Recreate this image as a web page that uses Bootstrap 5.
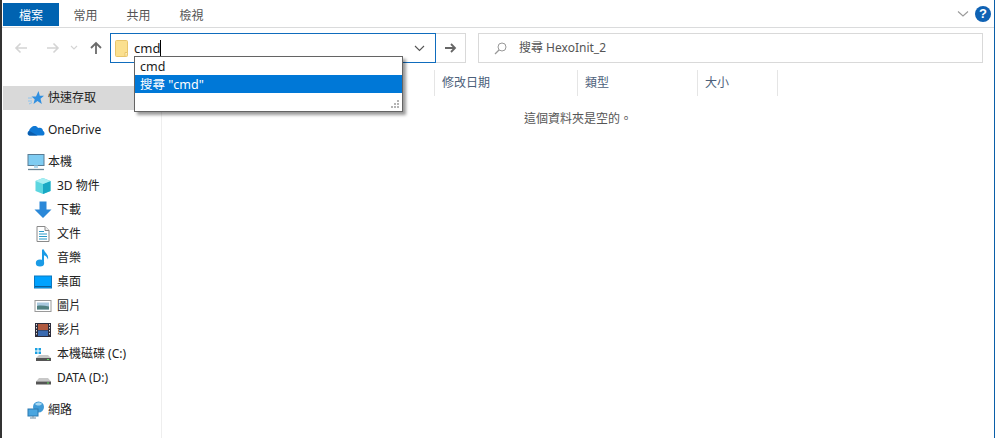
<!DOCTYPE html>
<html lang="zh-Hant">
<head>
<meta charset="utf-8">
<link href="https://cdn.jsdelivr.net/npm/bootstrap@5.3.0/dist/css/bootstrap.min.css" rel="stylesheet">
<style>
html,body{height:100%;overflow:hidden}
body{background:#fff;color:#1a1a1a;font:12px/16px "Noto Sans","Noto Sans CJK TC",sans-serif}
.win{height:438px;width:995px;border-left:2px solid #333;border-right:1px solid #0a5ea8;position:relative}
.ribbon{height:28px;border-bottom:1px solid #dadbdc;padding:3px 0 0 1px}
.rtab{height:23px;line-height:25px;width:53px;text-align:center;color:#555;white-space:nowrap}
.rtab.on{background:#0063b1;color:#fff;width:56px}
.winctl{margin-top:3px;padding-right:3px}
.fold{margin-right:6px}
.helpdot{width:16px;height:16px;border-radius:50%;background:#0f62b4;color:#fff;font:bold 13px/16px "Liberation Sans",sans-serif;text-align:center}
.addr{height:29px;margin-top:5px}
.navs{width:108px;padding-left:12px}
.fwd{margin-left:18px}
.hist{margin-left:10px}
.upbtn{margin-left:11px}
.pathbox{width:326px;height:30px;border:1px solid #0f6cbd;padding:0 10px 0 4px}
.gobox{width:30px;height:30px;border:1px solid #d9d9d9;border-left:0}
.findbox{width:505px;height:30px;border:1px solid #d9d9d9;margin-left:12px;color:#555;padding-left:15px}
.lens{margin-right:12px}
.typed{font-size:13px;margin-left:6px;border-right:1px solid #000;line-height:17px}
.sidepane{width:160px;height:375px;border-right:1px solid #eeeeee;margin-top:9px;flex:none;padding-top:15px}
.sideitem{height:24px;white-space:nowrap;color:#222}
.sideitem.sel{background:#d9d9d9;width:132px;margin-left:1px}
.lv1{padding-left:25px}
.lv1.sel{padding-left:24px}
.lv2{padding-left:32px}
.mt8px{margin-top:8px}
.ic{width:18px;height:18px;flex:none;margin-right:5px}
.lv1 .ic{margin-right:3px}
.colhead{height:26px;margin-top:8px;color:#4c607a}
.colcell{height:26px;border-right:1px solid #e5e5e5;line-height:26px;padding-left:7px}
.cname{width:273px}
.cdate{width:143px}
.ctype{width:120px}
.csize{width:80px}
.emptymsg{margin-left:362px;margin-top:15px;color:#555;line-height:16px}
.popup{position:absolute;left:132px;top:56px;width:269px;height:56px;background:#fff;border:1px solid #646464;box-shadow:3px 3px 3px rgba(0,0,0,.4);font-size:12.5px}
.popitem{height:18px;line-height:20px;padding-left:5px}
.popitem.on{background:#0078d7;color:#fff}
.grip{position:absolute;right:2px;bottom:2px}
</style>
</head>
<body>
<div class="win">
  <div class="ribbon d-flex align-items-start">
    <div class="rtab on">檔案</div>
    <div class="rtab">常用</div>
    <div class="rtab">共用</div>
    <div class="rtab">檢視</div>
    <div class="winctl ms-auto d-flex align-items-center">
      <svg class="fold" width="12" height="8" viewBox="0 0 12 8"><path d="M1 1.500 6 6l5-4.500" fill="none" stroke="#9a9a9a" stroke-width="1.100"/></svg>
      <div class="helpdot">?</div>
    </div>
  </div>
  <div class="addr d-flex">
    <div class="navs d-flex align-items-center">
      <svg width="14" height="12" viewBox="0 0 14 12"><path d="M13 6H2M6.500 1.500 2 6l4.500 4.500" fill="none" stroke="#d4d4d4" stroke-width="1.600"/></svg>
      <svg class="fwd" width="14" height="12" viewBox="0 0 14 12"><path d="M1 6h11M7.500 1.500 12 6l-4.500 4.500" fill="none" stroke="#d4d4d4" stroke-width="1.600"/></svg>
      <svg class="hist" width="8" height="5" viewBox="0 0 8 5"><path d="M1 1 4 4l3-3" fill="none" stroke="#d4d4d4" stroke-width="1.100"/></svg>
      <svg class="upbtn" width="14" height="14" viewBox="0 0 14 14"><path d="M7 13V2M2 7l5-5 5 5" fill="none" stroke="#6b6b6b" stroke-width="1.800"/></svg>
    </div>
    <div class="pathbox d-flex align-items-center">
      <svg width="13" height="17" viewBox="0 0 13 17"><rect x=".5" y=".5" width="12" height="16" rx="1" fill="#fbe08f" stroke="#e8c56c"/><path d="M10 16.500v-4h2.500" fill="#fff3c8" stroke="#e8c56c"/></svg>
      <span class="typed">cmd</span>
      <svg class="ms-auto" width="11" height="7" viewBox="0 0 11 7"><path d="M1 1l4.500 4.500L10 1" fill="none" stroke="#555" stroke-width="1.100"/></svg>
    </div>
    <div class="gobox d-flex align-items-center justify-content-center">
      <svg width="13" height="12" viewBox="0 0 13 12"><path d="M1 6h10M7 2l4 4-4 4" fill="none" stroke="#666" stroke-width="1.800"/></svg>
    </div>
    <div class="findbox d-flex align-items-center">
      <svg class="lens" width="13" height="13" viewBox="0 0 13 13"><circle cx="8" cy="5" r="4" fill="none" stroke="#999"/><path d="M5 8 1 12" stroke="#999" stroke-width="1.200"/></svg>
      <span>搜尋 HexoInit_2</span>
    </div>
  </div>
  <div class="d-flex">
    <nav class="sidepane">
      <div class="sideitem sel lv1 d-flex align-items-center">
        <svg class="ic" viewBox="0 0 18 18"><path d="M11.500 2l1.300 4.700H17l-3.500 3 1.300 5.300-4.300-3-4 3 1.200-4.800L4.500 7.500H9z" fill="#2f8fe0"/><path d="M1 9h4M1 12h4M2 15l3-1.500" stroke="#8cc4f0"/></svg><span>快速存取</span>
      </div>
      <div class="sideitem lv1 d-flex align-items-center mt8px">
        <svg class="ic" viewBox="0 0 18 18"><path d="M2.500 14.500c-2.500 0-2.500-4-.5-4.500C3 5.500 9 3 11 7c3-1 5 .5 5 3 2 .5 2 4.500 0 4.500z" fill="#0f78d4"/><path d="M2.500 14.500c-2-.5-2-3 0-4.500l8 4.500z" fill="#0a5cab"/></svg><span>OneDrive</span>
      </div>
      <div class="sideitem lv1 d-flex align-items-center mt8px">
        <svg class="ic" viewBox="0 0 18 18"><rect x="1" y="1.500" width="16" height="11" fill="#7fccf2" stroke="#5a7c94"/><path d="M7 12.500h4v2.500H7z" fill="#b0d8ee"/><path d="M1 16.500h16" stroke="#6d8696" stroke-width="1.300"/></svg><span>本機</span>
      </div>
      <div class="sideitem lv2 d-flex align-items-center">
        <svg class="ic" viewBox="0 0 18 18"><path d="M9 1l7.500 3v10L9 17l-7.500-3V4z" fill="#5cd6e0"/><path d="M9 7l7.500-3v10L9 17z" fill="#18a8c4"/><path d="M9 1l7.500 3L9 7 1.500 4z" fill="#a6eef2"/></svg><span>3D 物件</span>
      </div>
      <div class="sideitem lv2 d-flex align-items-center">
        <svg class="ic" viewBox="0 0 18 18"><path d="M5.500 .5h7v8H17.500L9 17 .5 8.500h5z" fill="#2b88d8"/></svg><span>下載</span>
      </div>
      <div class="sideitem lv2 d-flex align-items-center">
        <svg class="ic" viewBox="0 0 18 18"><path d="M3 1.500h8l4 4v11H3z" fill="#fff" stroke="#8a8a8a"/><path d="M11 1.500v4h4" fill="#eee" stroke="#8a8a8a"/><path d="M5 6.500h5M5 9h8M5 11.500h8M5 14h8" stroke="#2a9ac8"/></svg><span>文件</span>
      </div>
      <div class="sideitem lv2 d-flex align-items-center">
        <svg class="ic" viewBox="0 0 18 18"><ellipse cx="6" cy="14" rx="4.200" ry="3.500" fill="#1a9be6"/><path d="M8 14V.5h2c0 3 5 4.500 4 10-1-3-2.500-4-4-4.300V14z" fill="#1a9be6"/></svg><span>音樂</span>
      </div>
      <div class="sideitem lv2 d-flex align-items-center">
        <svg class="ic" viewBox="0 0 18 18"><rect x=".5" y="3" width="17" height="12" fill="#00a2ff" stroke="#0a78c0"/><path d="M1 13.500h16" stroke="#0a5f9a"/></svg><span>桌面</span>
      </div>
      <div class="sideitem lv2 d-flex align-items-center">
        <svg class="ic" viewBox="0 0 18 18"><rect x="1" y="3.500" width="16" height="11" fill="#fff" stroke="#9a9a9a"/><rect x="3" y="5.500" width="12" height="7" fill="#a8c8de"/><path d="M3 9c4-1 8 0 12 .5v3H3z" fill="#4f8080"/></svg><span>圖片</span>
      </div>
      <div class="sideitem lv2 d-flex align-items-center">
        <svg class="ic" viewBox="0 0 18 18"><rect x="1" y="2" width="16" height="14" fill="#2b2b3a"/><rect x="4" y="3" width="10" height="6" fill="#b05a40"/><rect x="4" y="9.500" width="10" height="5.500" fill="#3a6ab0"/><path d="M2.500 3v12M15.500 3v12" stroke="#ddd" stroke-dasharray="1.500 1.500"/></svg><span>影片</span>
      </div>
      <div class="sideitem lv2 d-flex align-items-center">
        <svg class="ic" viewBox="0 0 18 18"><path d="M1 3h2.500v2.500H1zM4.500 3H7v2.500H4.500zM1 6.500h2.500V9H1zM4.500 6.500H7V9H4.500z" fill="#1ba1e2"/><path d="M5 10h9l3 3H2z" fill="#c8c8c8"/><rect x="2" y="13" width="15" height="3" fill="#555"/><rect x="13" y="14" width="2" height="1" fill="#5fe05f"/></svg><span>本機磁碟 (C:)</span>
      </div>
      <div class="sideitem lv2 d-flex align-items-center">
        <svg class="ic" viewBox="0 0 18 18"><path d="M5 9h9l3 3.500H2z" fill="#c8c8c8"/><rect x="2" y="12.500" width="15" height="3" fill="#555"/><rect x="13" y="13.500" width="2" height="1" fill="#5fe05f"/></svg><span>DATA (D:)</span>
      </div>
      <div class="sideitem lv1 d-flex align-items-center mt8px">
        <svg class="ic" viewBox="0 0 18 18"><circle cx="11.500" cy="6" r="5.500" fill="#3f9ad6"/><path d="M8 3c2-2 6-2 7 0-2 2-5 2-7 0z" fill="#a9d8f2"/><rect x="1" y="8" width="10" height="7" fill="#4aa6e0" stroke="#2a78b0"/><path d="M6 15v1.500M3 17h6" stroke="#6a8aa0"/></svg><span>網路</span>
      </div>
    </nav>
    <main class="flex-grow-1">
      <div class="colhead d-flex">
        <div class="colcell cname"></div>
        <div class="colcell cdate">修改日期</div>
        <div class="colcell ctype">類型</div>
        <div class="colcell csize">大小</div>
      </div>
      <p class="emptymsg mb-0">這個資料夾是空的。</p>
    </main>
  </div>
  <div class="popup">
    <div class="popitem">cmd</div>
    <div class="popitem on">搜尋 "cmd"</div>
    <svg class="grip" width="10" height="10" viewBox="0 0 10 10"><path d="M7 1h2v2H7zM4 4h2v2H4zM7 4h2v2H7zM1 7h2v2H1zM4 7h2v2H4zM7 7h2v2H7z" fill="#b4b4b4"/></svg>
  </div>
</div>
</body>
</html>
